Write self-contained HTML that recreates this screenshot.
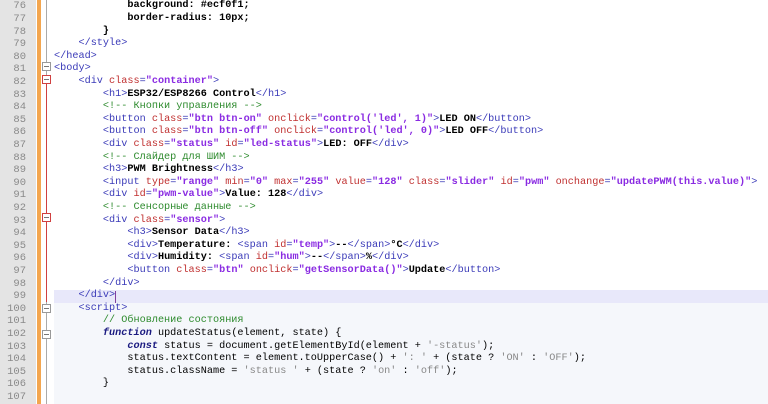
<!DOCTYPE html>
<html><head><meta charset="utf-8"><style>
body{margin:0;width:768px;height:404px;overflow:hidden;background:#fff;position:relative;font-family:"Liberation Mono","DejaVu Sans Mono",monospace;font-size:10.2px}
.g{position:absolute;left:0;top:0;width:36px;height:404px;background:#e4e4e4}
.o{position:absolute;left:37px;top:0;width:4px;height:404px;background:#f3a64f}
.hl{position:absolute;left:54px;right:0;height:12.6px}
.l{position:absolute;left:0;height:12.6px;line-height:12.6px;white-space:pre}
.n{position:absolute;left:0;width:26px;text-align:right;color:#8a8a8a;font-family:"Liberation Mono",monospace;font-size:10.5px}
.c{position:absolute;left:54px}
.t{color:#3a3ab8}.a{color:#c03030}.v{color:#8a2be2;font-weight:bold}.b{color:#000;font-weight:bold}.m{color:#2e8b2e}
.k{color:#1a1a80;font-weight:bold;font-style:italic}.s{color:#888}.j{color:#000}
.fb{position:absolute;left:42px;width:9px;height:9px;border:1px solid #999;box-sizing:border-box;background:#fff}
.fb::after{content:"";position:absolute;left:1px;right:1px;top:3px;height:1px;background:#777}
</style></head><body>
<div class="g"></div><div class="o"></div>
<div style="position:absolute;left:54px;right:0;top:290px;height:114px;background:#f5f7fb"></div>
<div class="hl" style="top:290.1px;background:#e8e8fa"></div>
<div style="position:absolute;left:46px;top:0;width:1px;height:92px;background:#aaa"></div>
<div style="position:absolute;left:46px;top:80px;width:1px;height:222px;background:#d04040"></div>
<div style="position:absolute;left:46px;top:302px;width:1px;height:102px;background:#aaa"></div>
<div class="fb" style="top:62px"></div>
<div class="fb" style="top:75px;border-color:#d04040"></div>
<div class="fb" style="top:213px;border-color:#d04040"></div>
<div class="fb" style="top:304px"></div>
<div class="fb" style="top:330px"></div>
<div style="position:absolute;left:115px;top:291px;width:1px;height:12px;background:#8040a0"></div>
<div id="code"></div>
<script>
var L=[
[76,'            <span class="b">background: #ecf0f1;</span>'],
[77,'            <span class="b">border-radius: 10px;</span>'],
[78,'        <span class="b">}</span>'],
[79,'    <span class="t">&lt;/style&gt;</span>'],
[80,'<span class="t">&lt;/head&gt;</span>'],
[81,'<span class="t">&lt;body&gt;</span>'],
[82,'    <span class="t">&lt;div </span><span class="a">class</span><span class="t">=</span><span class="v">"container"</span><span class="t">&gt;</span>'],
[83,'        <span class="t">&lt;h1&gt;</span><span class="b">ESP32/ESP8266 Control</span><span class="t">&lt;/h1&gt;</span>'],
[84,'        <span class="m">&lt;!-- Кнопки управления --&gt;</span>'],
[85,'        <span class="t">&lt;button </span><span class="a">class</span><span class="t">=</span><span class="v">"btn btn-on"</span> <span class="a">onclick</span><span class="t">=</span><span class="v">"control(\'led\', 1)"</span><span class="t">&gt;</span><span class="b">LED ON</span><span class="t">&lt;/button&gt;</span>'],
[86,'        <span class="t">&lt;button </span><span class="a">class</span><span class="t">=</span><span class="v">"btn btn-off"</span> <span class="a">onclick</span><span class="t">=</span><span class="v">"control(\'led\', 0)"</span><span class="t">&gt;</span><span class="b">LED OFF</span><span class="t">&lt;/button&gt;</span>'],
[87,'        <span class="t">&lt;div </span><span class="a">class</span><span class="t">=</span><span class="v">"status"</span> <span class="a">id</span><span class="t">=</span><span class="v">"led-status"</span><span class="t">&gt;</span><span class="b">LED: OFF</span><span class="t">&lt;/div&gt;</span>'],
[88,'        <span class="m">&lt;!-- Слайдер для ШИМ --&gt;</span>'],
[89,'        <span class="t">&lt;h3&gt;</span><span class="b">PWM Brightness</span><span class="t">&lt;/h3&gt;</span>'],
[90,'        <span class="t">&lt;input </span><span class="a">type</span><span class="t">=</span><span class="v">"range"</span> <span class="a">min</span><span class="t">=</span><span class="v">"0"</span> <span class="a">max</span><span class="t">=</span><span class="v">"255"</span> <span class="a">value</span><span class="t">=</span><span class="v">"128"</span> <span class="a">class</span><span class="t">=</span><span class="v">"slider"</span> <span class="a">id</span><span class="t">=</span><span class="v">"pwm"</span> <span class="a">onchange</span><span class="t">=</span><span class="v">"updatePWM(this.value)"</span><span class="t">&gt;</span>'],
[91,'        <span class="t">&lt;div </span><span class="a">id</span><span class="t">=</span><span class="v">"pwm-value"</span><span class="t">&gt;</span><span class="b">Value: 128</span><span class="t">&lt;/div&gt;</span>'],
[92,'        <span class="m">&lt;!-- Сенсорные данные --&gt;</span>'],
[93,'        <span class="t">&lt;div </span><span class="a">class</span><span class="t">=</span><span class="v">"sensor"</span><span class="t">&gt;</span>'],
[94,'            <span class="t">&lt;h3&gt;</span><span class="b">Sensor Data</span><span class="t">&lt;/h3&gt;</span>'],
[95,'            <span class="t">&lt;div&gt;</span><span class="b">Temperature: </span><span class="t">&lt;span </span><span class="a">id</span><span class="t">=</span><span class="v">"temp"</span><span class="t">&gt;</span><span class="b">--</span><span class="t">&lt;/span&gt;</span><span class="b">°C</span><span class="t">&lt;/div&gt;</span>'],
[96,'            <span class="t">&lt;div&gt;</span><span class="b">Humidity: </span><span class="t">&lt;span </span><span class="a">id</span><span class="t">=</span><span class="v">"hum"</span><span class="t">&gt;</span><span class="b">--</span><span class="t">&lt;/span&gt;</span><span class="b">%</span><span class="t">&lt;/div&gt;</span>'],
[97,'            <span class="t">&lt;button </span><span class="a">class</span><span class="t">=</span><span class="v">"btn"</span> <span class="a">onclick</span><span class="t">=</span><span class="v">"getSensorData()"</span><span class="t">&gt;</span><span class="b">Update</span><span class="t">&lt;/button&gt;</span>'],
[98,'        <span class="t">&lt;/div&gt;</span>'],
[99,'    <span class="t">&lt;/div&gt;</span>'],
[100,'    <span class="t">&lt;script&gt;</span>'],
[101,'        <span class="m">// Обновление состояния</span>'],
[102,'        <span class="k">function</span><span class="j"> updateStatus(element, state) {</span>'],
[103,'            <span class="k">const</span><span class="j"> status = document.getElementById(element + </span><span class="s">\'-status\'</span><span class="j">);</span>'],
[104,'            <span class="j">status.textContent = element.toUpperCase() + </span><span class="s">\': \'</span><span class="j"> + (state ? </span><span class="s">\'ON\'</span><span class="j"> : </span><span class="s">\'OFF\'</span><span class="j">);</span>'],
[105,'            <span class="j">status.className = </span><span class="s">\'status \'</span><span class="j"> + (state ? </span><span class="s">\'on\'</span><span class="j"> : </span><span class="s">\'off\'</span><span class="j">);</span>'],
[106,'        <span class="j">}</span>'],
[107,'']];
var h='';L.forEach(function(x){var t=(x[0]-76)*12.6+0.3;h+='<div class="l" style="top:'+t+'px;width:768px"><span class="n">'+x[0]+'</span><span class="c">'+x[1]+'</span></div>';});
document.getElementById('code').innerHTML=h;
</script>
</body></html>
